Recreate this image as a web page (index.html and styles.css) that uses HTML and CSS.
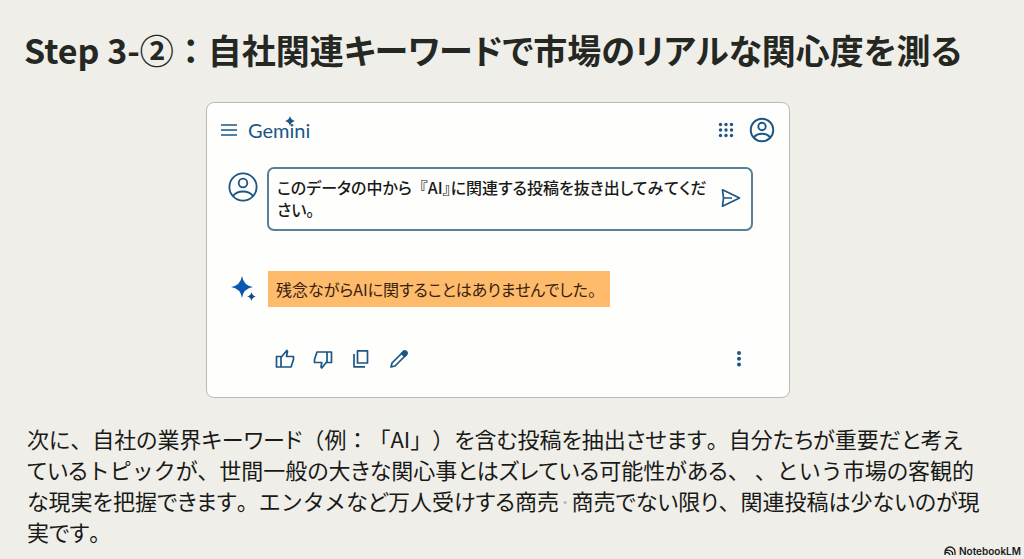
FILE: index.html
```html
<!DOCTYPE html>
<html lang="ja">
<head>
<meta charset="utf-8">
<meta name="viewport" content="width=device-width, initial-scale=1">
<title>Step 3-②：自社関連キーワード</title>
<link rel="stylesheet" href="styles.css">
</head>
<body>
<main class="slide">
  <h1 class="title">Step 3-②<span class="full">：</span>自社関連キーワードで市場のリアルな関心度を測る</h1>

  <section class="card" aria-label="Gemini">
    <header class="bar">
      <button class="icon-btn" type="button" aria-label="メニュー">
        <svg width="18" height="14" viewBox="0 0 18 14" fill="none" stroke="currentColor" stroke-width="1.600"><path d="M1 2h16M1 7h16M1 12h16"/></svg>
      </button>
      <div class="brand">Gemini
        <svg class="brand-star" width="10" height="10" viewBox="0 0 8 8" fill="currentColor"><path d="M4 0Q4.700 3.300 8 4Q4.700 4.700 4 8Q3.300 4.700 0 4Q3.300 3.300 4 0Z"/></svg>
      </div>
      <button class="icon-btn apps" type="button" aria-label="アプリ">
        <svg width="16" height="16" viewBox="0 0 16 16" fill="currentColor"><circle cx="2.500" cy="2.500" r="1.700"/><circle cx="8" cy="2.500" r="1.700"/><circle cx="13.500" cy="2.500" r="1.700"/><circle cx="2.500" cy="8" r="1.700"/><circle cx="8" cy="8" r="1.700"/><circle cx="13.500" cy="8" r="1.700"/><circle cx="2.500" cy="13.500" r="1.700"/><circle cx="8" cy="13.500" r="1.700"/><circle cx="13.500" cy="13.500" r="1.700"/></svg>
      </button>
      <button class="icon-btn" type="button" aria-label="アカウント">
        <svg width="26" height="26" viewBox="0 0 26 26" fill="none" stroke="currentColor" stroke-width="1.9"><circle cx="13" cy="13" r="11.300"/><circle cx="13" cy="9.500" r="3.700"/><path d="M4.800 20.500C8.500 15.500 17.500 15.500 21.200 20.500"/></svg>
      </button>
    </header>

    <div class="prompt-row">
      <svg class="avatar" width="30" height="30" viewBox="0 0 30 30" fill="none" stroke="currentColor" stroke-width="1.800"><circle cx="15" cy="15" r="13.600"/><circle cx="15" cy="11" r="4.300"/><path d="M5 24C9.500 18 20.500 18 25 24"/></svg>
      <div class="prompt">
        <p class="prompt-text">このデータの中から<span class="full">『</span>AI』に関連する投稿を抜き出して<span class="full">みて</span>くだ<br>さい。</p>
        <button class="icon-btn" type="button" aria-label="送信">
          <svg width="20" height="20" viewBox="0 0 20 20" fill="none" stroke="currentColor" stroke-width="1.700" stroke-linejoin="round"><path d="M1.500 1.800L18.500 10L1.500 18.200L2.500 10ZM2.500 10H11"/></svg>
        </button>
      </div>
    </div>

    <div class="answer-row">
      <svg class="sparkle" width="28" height="28" viewBox="0 0 28 28"><path fill="#0b57b0" d="M12 1Q13.500 10.500 23 12Q13.500 13.500 12 23Q10.500 13.500 1 12Q10.500 10.500 12 1Z"/><path fill="#124d83" d="M21.500 17Q22.200 20.800 26 21.500Q22.200 22.200 21.500 26Q20.800 22.200 17 21.500Q20.800 20.800 21.500 17Z"/></svg>
      <p class="answer">残念ながらAIに関することはありませんでした。</p>
    </div>

    <footer class="actions">
      <button class="icon-btn" type="button" aria-label="良い回答">
        <svg width="20" height="20" viewBox="0 0 20 20" fill="none" stroke="currentColor" stroke-width="1.700" stroke-linejoin="round"><path d="M1.500 7.500H6V18H1.500ZM6 8.500L11.800 1.500L12.500 2.500L11.500 7.500H18.500V10.500L16 18H6"/></svg>
      </button>
      <button class="icon-btn" type="button" aria-label="悪い回答">
        <svg width="20" height="20" viewBox="0 0 20 20" fill="none" stroke="currentColor" stroke-width="1.700" stroke-linejoin="round"><path d="M18.500 13.500H14V3H18.500ZM14 12.500L8.800 19L8 18L8.800 13.500H1.500V10.500L4 3H14"/></svg>
      </button>
      <button class="icon-btn" type="button" aria-label="コピー">
        <svg width="20" height="20" viewBox="0 0 20 20" fill="none" stroke="currentColor" stroke-width="1.700" stroke-linejoin="round"><path d="M6.500 1.800H16.500V14H6.500ZM3 5V17.800H14"/></svg>
      </button>
      <button class="icon-btn" type="button" aria-label="編集">
        <svg width="20" height="20" viewBox="0 0 20 20" fill="none" stroke="currentColor" stroke-width="1.700" stroke-linejoin="round"><path d="M2 18L3 14L14.500 2.500Q16 1.500 17.300 2.700Q18.500 4 17.500 5.500L6 17Z"/><path fill="currentColor" d="M12.500 4.500L14.500 2.500Q16 1.500 17.300 2.700Q18.500 4 17.500 5.500L15.500 7.500Z"/></svg>
      </button>
      <button class="icon-btn more" type="button" aria-label="その他">
        <svg width="6" height="18" viewBox="0 0 6 18" fill="currentColor"><circle cx="3" cy="3" r="2"/><circle cx="3" cy="8.700" r="2"/><circle cx="3" cy="14.400" r="2"/></svg>
      </button>
    </footer>
  </section>

  <p class="body-text">次に<span class="full">、</span>自社の業界キーワード<span class="full">（</span>例<span class="full">：「</span>AI<span class="full">」）</span>を含む投稿を抽出させます<span class="full">。</span>自分たちが重要だと考え<br>ている<span class="full">トピック</span>が<span class="full">、</span>世間一般の大きな関心事とはズレている可能性がある<span class="full">、 、という</span>市場の客観的<br>な現実を把握できます<span class="full">。エンタメ</span>など万人受けする商売<span class="dot">·</span>商売でない限り<span class="full">、</span>関連投稿は少ないのが現<br>実です<span class="full">。</span></p>

  <div class="credit">
    <svg width="12" height="10" viewBox="0 0 12 10" fill="none" stroke="currentColor" stroke-width="1.300"><path d="M1 9V6A5 5 0 0 1 11 6V9M1 5.200Q5.500 2.500 8.500 6.500V9M1 7.300Q4.500 5 6 9"/></svg>
    <span>NotebookLM</span>
  </div>
</main>
</body>
</html>
```
FILE: styles.css
```css
* {
  box-sizing: border-box;
}

body {
  margin: 0;
  background: #efeee9;
  color: #191a18;
  font-family: "Noto Sans CJK JP", sans-serif;
}

p,
h1 {
  margin: 0;
}

.slide {
  position: relative;
  min-height: 100vh;
  padding: 26px 24px 8px;
}

.title {
  font-size: 34px;
  line-height: 48px;
  font-weight: 700;
  font-feature-settings: "palt";
  color: #252722;
  white-space: nowrap;
}

/* Characters that keep their full-width cell inside proportional kana. */
.full {
  font-feature-settings: normal;
  text-spacing-trim: space-all;
}

.card {
  width: 60%;
  max-width: 584px;
  margin: 28px auto 0 182px;
  padding: 14px 14px 28px 13px;
  background: #fefefd;
  border: 1px solid #babbb6;
  border-radius: 8px;
  color: #1b5685;
}

.icon-btn {
  display: flex;
  padding: 0;
  border: 0;
  background: none;
  color: inherit;
}

.bar {
  display: flex;
  align-items: center;
  gap: 10px;
  height: 26px;
}

.brand {
  position: relative;
  font-family: Lato, sans-serif;
  font-size: 20px;
  line-height: 26px;
}

.brand-star {
  position: absolute;
  top: -1px;
  right: 15px;
}

.apps {
  margin: 0 5px 0 auto;
}

.prompt-row {
  display: flex;
  align-items: flex-start;
  gap: 9px;
  margin: 24px 22px 0 8px;
}

.avatar {
  flex: none;
  margin-top: 5px;
}

.prompt {
  display: flex;
  flex: 1;
  align-items: center;
  justify-content: space-between;
  padding: 7px 10px 9px 8px;
  border: 2px solid #568199;
  border-radius: 7px;
}

.prompt-text,
.answer {
  font-size: 16px;
  line-height: 22px;
  font-weight: 500;
  font-feature-settings: "palt";
  color: #191a18;
  white-space: nowrap;
}

.answer-row {
  display: flex;
  align-items: center;
  gap: 10px;
  margin: 40px 0 0 10px;
}

.answer {
  padding: 7px 14px 7px 8px;
  background: #fdbb6b;
  color: #38200f;
  font-weight: 400;
}

.actions {
  display: flex;
  align-items: center;
  gap: 18px;
  margin: 42px 33px 0 55px;
}

.more {
  margin-left: auto;
}

.body-text {
  margin: 25px 0 0 3px;
  font-size: 22px;
  line-height: 31px;
  font-feature-settings: "palt";
  white-space: nowrap;
}

.dot {
  color: #b9b6ac;
}

.credit {
  position: absolute;
  right: 3px;
  bottom: 1px;
  display: flex;
  align-items: center;
  gap: 3px;
  font-family: Inter, sans-serif;
  font-size: 10px;
  line-height: 14px;
  font-weight: 600;
}
```
